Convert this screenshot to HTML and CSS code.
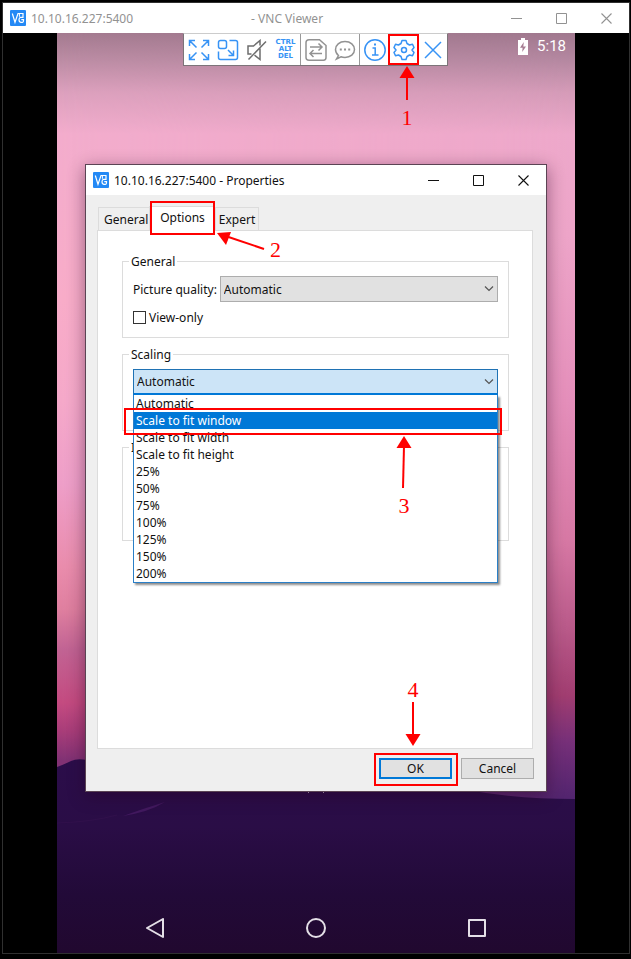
FILE: index.html
```html
<!DOCTYPE html>
<html lang="en">
<head>
<meta charset="utf-8">
<meta name="viewport" content="width=device-width, initial-scale=1">
<title>10.10.16.227:5400 - VNC Viewer</title>
<link rel="stylesheet" href="styles.css">
</head>
<body>
<svg class="defs" aria-hidden="true">
  <symbol id="logo" viewBox="0 0 16 16">
    <rect width="16" height="16" rx="1" fill="#2489f5"/>
    <path d="M2.300 3.500 5 12.300 8 3.500H13V7.300H10.500Q9 7.500 9 9.800T10.800 12.300H12.500Q13.500 12.300 13.500 10.800V9.600H11.300" fill="none" stroke="#fff" stroke-width="1.200"/>
    <path d="M9.400 3.500V6.800" stroke="#fff"/>
  </symbol>
  <symbol id="min" viewBox="0 0 11 11"><path d="M0 5.500H11" stroke="currentColor"/></symbol>
  <symbol id="max" viewBox="0 0 11 11"><path d="M.500.500H10.500V10.500H.500Z" fill="none" stroke="currentColor"/></symbol>
  <symbol id="close" viewBox="0 0 11 11"><path d="M.500.500 10.500 10.500M10.500.500.500 10.500" stroke="currentColor" stroke-width="1.100"/></symbol>
  <symbol id="arrow" viewBox="0 0 16 34"><path d="M8 10V34" stroke="#f00" stroke-width="2"/><path d="M8 0 15.500 12H.500Z" fill="#f00"/></symbol>
</svg>

<main class="window">
  <header class="titlebar titlebar--inactive">
    <svg class="logo" aria-hidden="true"><use href="#logo"/></svg>
    <span>10.10.16.227:5400</span>
    <span class="titlebar__app">- VNC Viewer</span>
    <div class="controls">
      <button aria-label="Minimize"><svg><use href="#min"/></svg></button>
      <button aria-label="Maximize"><svg><use href="#max"/></svg></button>
      <button aria-label="Close"><svg><use href="#close"/></svg></button>
    </div>
  </header>

  <div class="viewport">
    <div class="screen">
      <svg class="wallpaper" viewBox="0 0 518 920" preserveAspectRatio="none" aria-hidden="true">
        <defs>
          <linearGradient id="sky-left" x1="0" y1="0" x2="0" y2="1">
            <stop offset="0" stop-color="#a47b90"/><stop offset=".03" stop-color="#bd8da5"/>
            <stop offset=".065" stop-color="#dda1be"/><stop offset=".11" stop-color="#f3adcd"/>
            <stop offset=".29" stop-color="#f8adc9"/><stop offset=".4" stop-color="#f5a9ca"/>
            <stop offset=".49" stop-color="#ee9fc9"/><stop offset=".58" stop-color="#ea8dad"/>
            <stop offset=".626" stop-color="#e080a0"/><stop offset=".67" stop-color="#c26494"/>
            <stop offset=".728" stop-color="#c54b81"/><stop offset=".76" stop-color="#a83d79"/>
            <stop offset=".79" stop-color="#823274"/>
          </linearGradient>
          <linearGradient id="sky-right" x1="0" y1="0" x2="0" y2="1">
            <stop offset="0" stop-color="#a0788e"/><stop offset=".03" stop-color="#b588a1"/>
            <stop offset=".065" stop-color="#d59bb8"/><stop offset=".11" stop-color="#eda8ca"/>
            <stop offset=".22" stop-color="#eda4c8"/><stop offset=".4" stop-color="#e48eba"/>
            <stop offset=".55" stop-color="#d678a4"/><stop offset=".65" stop-color="#b75888"/>
            <stop offset=".72" stop-color="#a03d70"/><stop offset=".77" stop-color="#763079"/>
            <stop offset=".83" stop-color="#52256f"/>
          </linearGradient>
          <linearGradient id="fade"><stop offset="0" stop-color="#000"/><stop offset="1" stop-color="#fff"/></linearGradient>
          <mask id="to-right"><rect width="518" height="920" fill="url(#fade)"/></mask>
          <linearGradient id="hill" x1="0" y1="0" x2="0" y2="1">
            <stop offset="0" stop-color="#2b0d4a"/><stop offset=".35" stop-color="#2a0d46"/>
            <stop offset=".7" stop-color="#220a38"/><stop offset="1" stop-color="#21082f"/>
          </linearGradient>
        </defs>
        <rect width="518" height="920" fill="url(#sky-left)"/>
        <rect width="518" height="920" fill="url(#sky-right)" mask="url(#to-right)"/>
        <path d="M0 734Q8 731 14 728T30 727Q120 742 220 744T410 757Q460 766 518 766V920H0Z" fill="url(#hill)"/>
        <path d="M66 783Q92 779 108 769Q88 775 66 783Z" fill="#42195f"/>
        <path d="M0 790Q35 789 60 782" fill="none" stroke="#35134f" opacity=".6"/>
        <path d="M251 760 253 758H257M267 760 265 758H261" fill="none" stroke="#bbaec4"/>
      </svg>

      <div class="status">
        <svg class="status__battery" viewBox="0 0 12 17" aria-hidden="true"><path d="M4 0H8V2H11V17H1V2H4Z" fill="#fff"/><path d="M6.800 4 3 9.800H5.600L5.200 14 9 8.400H6.300Z" fill="#a67d93"/></svg>
        <span>5:18</span>
      </div>

      <div class="toolbar" role="toolbar" aria-label="Session">
        <button aria-label="Full screen"><svg viewBox="0 0 22 22"><path d="M8.500 8.500 1.500 1.500M1.500 7V1.500H7M13.500 8.500 20.500 1.500M15 1.500H20.500V7M8.500 13.500 1.500 20.500M1.500 15V20.500H7M13.500 13.500 20.500 20.500M15 20.500H20.500V15"/></svg></button>
        <button aria-label="Scale"><svg viewBox="0 0 22 22"><rect x="1.500" y="1.500" width="8" height="8" rx="2"/><path d="M12.500 1.500H18.500Q20.500 1.500 20.500 3.500V18.500Q20.500 20.500 18.500 20.500H3.500Q1.500 20.500 1.500 18.500V12.500M11 11 16.500 16.500M16.500 11.500V16.500H11.500"/></svg></button>
        <button class="muted" aria-label="Mute"><svg viewBox="0 0 22 22"><path d="M14 6.500V1.500L7.500 7H2V15H5.500M8.500 16.200 14 20.500V9.500M2.500 20.500 20 2.500"/></svg></button>
        <button class="keys"><span>CTRL</span><span>ALT</span><span>DEL</span></button>
        <button class="dim split" aria-label="File transfer"><svg viewBox="0 0 22 22"><path d="M4 .800H14.500L21 6.500V18.500Q21 21.200 18.500 21.200H4Q1 21.200 1 18.500V3.500Q1 .800 4 .800ZM5 8H16.500M13.500 4.500 17 8 13.500 11.500M17 14.500H5.500M8.500 11 5 14.500 8.500 18"/></svg></button>
        <button class="dim" aria-label="Chat"><svg viewBox="0 0 22 22"><path d="M4.500 16.500Q1.500 14 1.500 10.500C1.500 6 5.500 2.500 11 2.500S20.500 6 20.500 10.500 16.500 18.500 11 18.500Q8.700 18.500 7 17.800L2.500 20Z"/><path d="M5.800 10.500H7.800M10 10.500H12M14.200 10.500H16.200" stroke-width="2"/></svg></button>
        <button class="split" aria-label="Information"><svg viewBox="0 0 22 22"><circle cx="11" cy="11" r="10.200"/><path d="M8.500 9H11.200V16M8 16H14.500"/><path d="M10 5.500H12" stroke-width="2"/></svg></button>
        <button class="target" aria-label="Properties"><svg viewBox="0 0 22 22"><path d="M9 1.500H13L14 4.500 16.500 6 19.500 5.200 21 8.500 19 11 21 13.500 19.500 16.800 16.500 16 14 17.500 13 20.500H9L8 17.500 5.500 16 2.500 16.800 1 13.500 3 11 1 8.500 2.500 5.200 5.500 6 8 4.500Z" stroke-linejoin="round"/><circle cx="11" cy="11" r="2.500"/></svg>
          <span class="mark mark--settings"></span>
        </button>
        <button aria-label="Disconnect"><svg viewBox="0 0 22 22"><path d="M3 3 19 19M19 3 3 19"/></svg></button>
        <div class="note note--1"><svg class="note__arrow"><use href="#arrow"/></svg><span>1</span></div>
      </div>

      <section class="dialog" role="dialog" aria-labelledby="dialog-title">
        <header class="titlebar">
          <svg class="logo" aria-hidden="true"><use href="#logo"/></svg>
          <span id="dialog-title">10.10.16.227:5400 - Properties</span>
          <div class="controls">
            <button aria-label="Minimize"><svg><use href="#min"/></svg></button>
            <button aria-label="Maximize"><svg><use href="#max"/></svg></button>
            <button aria-label="Close"><svg><use href="#close"/></svg></button>
          </div>
        </header>

        <div class="dialog__body">
          <div class="tabs" role="tablist">
            <button class="tab" role="tab">General</button>
            <button class="tab tab--active" role="tab" aria-selected="true">Options
              <span class="mark mark--tab"></span>
            </button>
            <button class="tab tab--last" role="tab">Expert</button>
            <div class="note--2">
              <svg viewBox="0 0 48 20" aria-hidden="true"><path d="M10 4.500 47 17" stroke="#f00" stroke-width="2"/><path d="M0 1 14 0 9 13Z" fill="#f00"/></svg>
              <span>2</span>
            </div>
          </div>

          <div class="panel" role="tabpanel">
            <fieldset class="group">
              <legend>General</legend>
              <div class="field">
                <label for="quality">Picture quality:</label>
                <div class="combo">
                  <select id="quality"><option>Automatic</option></select>
                  <svg class="combo__chevron" viewBox="0 0 10 6" aria-hidden="true"><path d="M1 .500 5 4.500 9 .500"/></svg>
                </div>
              </div>
              <label class="check"><input type="checkbox"><span>View-only</span></label>
            </fieldset>

            <fieldset class="group">
              <legend>Scaling</legend>
              <div class="combo combo--open">
                <select aria-label="Scaling"><option>Automatic</option></select>
                <svg class="combo__chevron" viewBox="0 0 10 6" aria-hidden="true"><path d="M1 .500 5 4.500 9 .500"/></svg>
                <ul class="list" role="listbox" aria-label="Scaling">
                  <li role="option">Automatic</li>
                  <li class="selected" role="option" aria-selected="true">Scale to fit window<span class="mark mark--option"></span></li>
                  <li role="option">Scale to fit width</li>
                  <li role="option">Scale to fit height</li>
                  <li role="option">25%</li>
                  <li role="option">50%</li>
                  <li role="option">75%</li>
                  <li role="option">100%</li>
                  <li role="option">125%</li>
                  <li role="option">150%</li>
                  <li role="option">200%</li>
                </ul>
                <div class="note note--3"><svg class="note__arrow note__arrow--long" viewBox="0 0 16 52"><path d="M8 10 7 52" stroke="#f00" stroke-width="2"/><path d="M8 0 15.500 12H.500Z" fill="#f00"/></svg><span>3</span></div>
              </div>
            </fieldset>

            <fieldset class="group group--tall">
              <legend>I</legend>
            </fieldset>
          </div>

          <footer class="actions">
            <button class="button button--default">OK
              <span class="mark mark--ok"></span>
              <span class="note note--4"><span>4</span><svg class="note__arrow note__arrow--down" viewBox="0 0 16 44"><path d="M8 0V34" stroke="#f00" stroke-width="2"/><path d="M8 44 15.500 32H.500Z" fill="#f00"/></svg></span>
            </button>
            <button class="button">Cancel</button>
          </footer>
        </div>
      </section>

      <nav class="navbar" aria-label="Device">
        <button aria-label="Back"><svg viewBox="0 0 20 20"><path d="M18 1V19L2 10Z"/></svg></button>
        <button aria-label="Home"><svg viewBox="0 0 20 20"><circle cx="10" cy="10" r="9"/></svg></button>
        <button aria-label="Recents"><svg viewBox="0 0 20 20"><path d="M2 2H18V18H2Z"/></svg></button>
      </nav>
    </div>
  </div>
</main>
</body>
</html>
```
FILE: styles.css
```css
* {
  box-sizing: border-box;
}

body {
  margin: 0;
  min-height: 100vh;
  display: flex;
  background: #000;
  color: #111;
  font: 12px/17px "Noto Sans", "Open Sans", sans-serif;
}

button,
select,
input {
  margin: 0;
  padding: 0;
  border: 0;
  background: none;
  color: inherit;
  font: inherit;
}

.defs {
  position: absolute;
  width: 0;
  height: 0;
}

.window {
  flex: 1;
  display: flex;
  flex-direction: column;
  margin: 2px 1px 5px 2px;
  border: 1px solid #303030;
}

/* Title bars */
.titlebar {
  display: flex;
  align-items: center;
  height: 30px;
  padding-left: 7px;
  background: #fff;
  white-space: nowrap;
}

.titlebar--inactive {
  color: #929292;
}

.titlebar__app {
  margin-left: 118px;
}

.logo {
  width: 16px;
  height: 16px;
  margin-right: 5px;
}

.controls {
  display: flex;
  margin-left: auto;
}

.controls button {
  display: grid;
  place-items: center;
  width: 45px;
  height: 28px;
}

.controls svg {
  width: 11px;
  height: 11px;
}

/* Remote screen */
.viewport {
  flex: 1;
  display: flex;
  padding: 0 54px;
}

.screen {
  position: relative;
  flex: 1;
  display: flex;
  flex-direction: column;
}

.wallpaper {
  position: absolute;
  width: 100%;
  height: 100%;
}

.status {
  position: absolute;
  top: 4px;
  right: 9px;
  display: flex;
  align-items: center;
  gap: 8px;
  color: #fff;
  font: 15px/18px Roboto, sans-serif;
}

.status__battery {
  width: 12px;
  height: 17px;
}

.toolbar {
  position: absolute;
  top: 0;
  right: 127px;
  display: flex;
  height: 33px;
  border: 1px solid #7c7479;
  border-top-color: #ccc;
  background: #fff;
}

.toolbar button {
  display: grid;
  place-content: center;
  box-sizing: content-box;
  width: 29px;
  height: 31px;
  color: #3793f5;
}

.toolbar button svg {
  width: 22px;
  height: 22px;
  fill: none;
  stroke: currentColor;
  stroke-width: 1.5;
}

.toolbar .split {
  border-left: 1px solid #999;
}

.toolbar .muted {
  color: #6e6e6e;
}

.toolbar .dim {
  color: #929292;
}

.toolbar .keys {
  font: bold 7px/7px "DejaVu Sans", sans-serif;
}

.toolbar .target {
  position: relative;
}

/* Red callouts */
.mark {
  position: absolute;
  border: 2px solid #f00;
  pointer-events: none;
}

.mark--settings {
  inset: 0 -1px;
}

.mark--tab {
  inset: -6px 0 -4px;
}

.mark--option {
  inset: -4px -5px -6px -10px;
}

.mark--ok {
  inset: -7px -8px -9px -7px;
}

.note,
.note--2 {
  position: absolute;
  color: #f00;
  font: 22px/24px "Liberation Serif", serif;
}

.note {
  display: flex;
  flex-direction: column;
  align-items: center;
  width: 16px;
}

.note__arrow {
  width: 16px;
  height: 34px;
}

.note__arrow--long {
  height: 52px;
}

.note__arrow--down {
  height: 44px;
}

.note--1 {
  top: 32px;
  right: 32px;
  gap: 6px;
}

.note--2 {
  top: 26px;
  left: 120px;
  display: flex;
  gap: 5px;
}

.note--2 svg {
  width: 48px;
  height: 20px;
}

.note--2 span {
  padding-top: 6px;
}

.note--3 {
  top: 67px;
  right: 86px;
  gap: 6px;
}

.note--4 {
  bottom: 31px;
  left: 24px;
}

/* Properties dialog */
.dialog {
  position: relative;
  margin: 131px 28px 0;
  border: 1px solid #5b4454;
  background: #efefef;
  box-shadow: 0 4px 16px rgba(40, 0, 30, .45);
}

.dialog__body {
  padding: 11px 12px 12px 11px;
}

.tabs {
  position: relative;
  z-index: 1;
  display: flex;
  align-items: flex-end;
  height: 25px;
  margin-bottom: -1px;
  padding: 0 1px;
}

.tab {
  height: 24px;
  padding: 0 1px 0 5px;
  border: 1px solid #dcdcdc;
  border-right: 0;
}

.tab--active {
  position: relative;
  height: 25px;
  padding: 0 10px 3px;
  border-bottom: 0;
  background: #fff;
}

.tab--last {
  padding: 0 3px;
  border-right: 1px solid #dcdcdc;
}

.panel {
  min-height: 519px;
  margin-right: 1px;
  padding: 22px 23px 22px 24px;
  border: 1px solid #dcdcdc;
  background: #fff;
}

.group {
  min-width: 0;
  min-height: 85px;
  margin: 0 0 8px;
  padding: 6px 10px 11px;
  border: 1px solid #dcdcdc;
}

.group--tall {
  min-height: 102px;
}

.group legend {
  margin-left: -4px;
  padding: 0 2px;
}

.field {
  display: flex;
  align-items: center;
  gap: 3px;
}

.combo {
  position: relative;
  flex: 1;
}

.combo select {
  appearance: none;
  display: block;
  width: 100%;
  height: 26px;
  padding: 0 20px 0 3px;
  border: 1px solid #adadad;
  border-radius: 0;
  background: #e1e1e1;
}

.combo--open select {
  border: 1px solid #1f72b4;
  border-bottom: 2px solid #0078d7;
  background: #cce4f7;
}

.combo__chevron {
  position: absolute;
  top: 10px;
  right: 4px;
  width: 10px;
  height: 6px;
  fill: none;
  stroke: #555;
  stroke-width: 1.2;
}

.list {
  position: absolute;
  z-index: 2;
  top: 26px;
  left: 0;
  right: 0;
  margin: 0;
  padding: 0;
  border: 1px solid #2a7fc7;
  border-top: 0;
  background: #fff;
  box-shadow: 2px 2px 2px rgba(0, 0, 0, .45);
  list-style: none;
}

.list li {
  position: relative;
  height: 17px;
  padding-left: 2px;
}

.list .selected {
  background: #0078d7;
  color: #fff;
}

.list .mark--option {
  z-index: 1;
}

.combo .note {
  z-index: 3;
}

.check {
  display: flex;
  align-items: center;
  gap: 3px;
  height: 16px;
  margin-top: 7px;
}

.check input {
  appearance: none;
  width: 13px;
  height: 13px;
  border: 1px solid #333;
  background: #fff;
}

.actions {
  display: flex;
  justify-content: flex-end;
  gap: 9px;
  margin-top: 9px;
}

.button {
  position: relative;
  width: 73px;
  height: 21px;
  border: 1px solid #adadad;
  background: #e1e1e1;
}

.button--default {
  border: 2px solid #0078d7;
}

/* Device navigation keys */
.navbar {
  position: relative;
  display: grid;
  grid-template-columns: repeat(3, 1fr);
  place-items: center;
  height: 50px;
  margin-top: auto;
  padding: 0 18px;
}

.navbar svg {
  display: block;
  width: 20px;
  height: 20px;
  fill: none;
  stroke: #e4dfe7;
  stroke-width: 2;
  stroke-linejoin: round;
}
```
